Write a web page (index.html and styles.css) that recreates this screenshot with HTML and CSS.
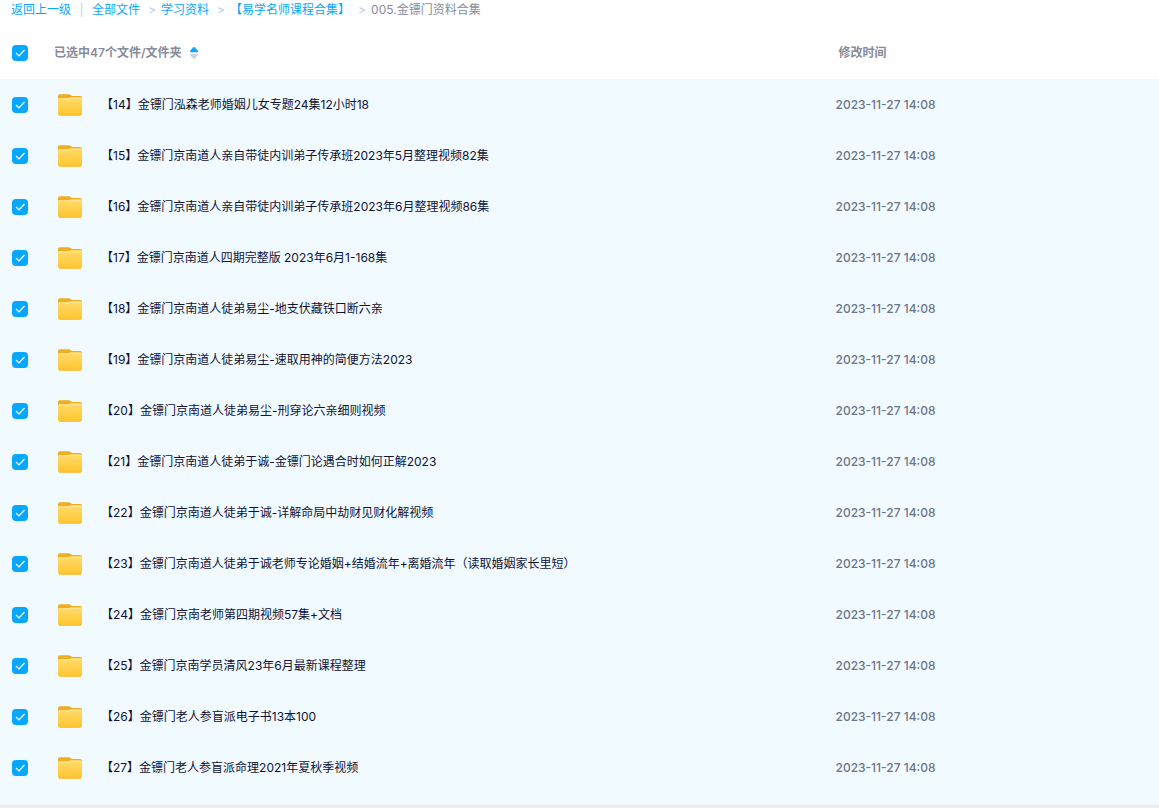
FILE: index.html
```html
<!DOCTYPE html>
<html lang="zh-CN">
<head>
  <meta charset="UTF-8">
  <meta name="viewport" content="width=device-width, initial-scale=1.0">
  <title>005.金镖门资料合集</title>
  <link rel="stylesheet" href="styles.css">
</head>
<body>
  <svg class="sprite" aria-hidden="true">
    <defs>
      <linearGradient id="folder-front" x1="0" y1="0" x2="0" y2="1">
        <stop offset="0" stop-color="#ffdc6c"/>
        <stop offset="0.5" stop-color="#ffd04c"/>
        <stop offset="1" stop-color="#ffc52e"/>
      </linearGradient>
      <symbol id="folder" viewBox="0 0 24 22">
        <path fill="#f0ad1e" d="M0 3.5V2.5C0 1 .8.2 2 .2h8.600c.9 0 1.400.3 2 .8l.6.5c.4.3.8.4 1.400.4H22c1.300 0 2 .7 2 2V9H0z"/>
        <path fill="url(#folder-front)" d="M0 5.500c0-1 .6-1.600 1.600-1.600h8.800c.8 0 1.300-.1 1.900-.4.5-.2 1-.2 1.600-.2h8.500c1 0 1.600.6 1.600 1.600v14.500c0 1.400-.8 2.200-2.200 2.200H2.200C.8 21.600 0 20.800 0 19.400z"/>
        <path fill="none" stroke="#ffe9a8" stroke-width=".8" d="M1 5h10c1.200 0 1.400-.6 2.800-.6H23"/>
        <path fill="none" stroke="#f5b728" stroke-width=".8" d="M1 20.900c.4.300.8.400 1.400.4h19.200c.6 0 1-.1 1.400-.4"/>
      </symbol>
    </defs>
  </svg>

  <nav class="breadcrumb" aria-label="路径">
    <a href="#">返回上一级</a>
    <span class="divider">|</span>
    <a href="#">全部文件</a>
    <span class="arrow">&gt;</span>
    <a href="#">学习资料</a>
    <span class="arrow">&gt;</span>
    <a href="#">【易学名师课程合集】</a>
    <span class="arrow">&gt;</span>
    <span class="current">005.金镖门资料合集</span>
  </nav>

  <main class="file-list">
    <table>
      <colgroup>
        <col class="col-check">
        <col class="col-icon">
        <col>
        <col class="col-date">
      </colgroup>
      <thead>
        <tr>
          <th class="check-cell"><input type="checkbox" id="check-all" aria-label="全选" checked></th>
          <th colspan="2">
            <button type="button" class="sort">
              已选中47个文件/文件夹
              <svg class="sort-icon" viewBox="0 0 8 12" aria-hidden="true">
                <path fill="#06a7ff" d="M4 0c.3 0 .6.2.9.5l2.700 3c.7.8.4 1.700-.5 1.700H.9C0 5.200-.3 4.300.4 3.500l2.700-3C3.400.2 3.700 0 4 0z"/>
                <path fill="#cfd0dc" d="M4 12c-.3 0-.6-.2-.9-.5l-2.700-3C-.3 7.700 0 6.800.9 6.800h6.200c.9 0 1.200.9.5 1.700l-2.700 3c-.3.300-.6.500-.9.500z"/>
              </svg>
            </button>
          </th>
          <th class="date-head">修改时间</th>
        </tr>
      </thead>
      <tbody id="files">
        <!-- rows are added by script.js -->
      </tbody>
    </table>
  </main>

  <script src="script.js"></script>
</body>
</html>
```
FILE: styles.css
```css
* {
  box-sizing: border-box;
}
body {
  margin: 0;
  min-height: 100vh;
  display: flex;
  flex-direction: column;
  font-family: Inter, "Noto Sans CJK SC", sans-serif;
  font-size: 12px;
  line-height: 20px;
  background-color: #fff;
}
.sprite {
  display: block;
  width: 0;
  height: 0;
}
.breadcrumb {
  display: flex;
  align-items: center;
  height: 27px;
  padding: 0 11px 7px;
  white-space: nowrap;
}
.breadcrumb a {
  color: #06a7ff;
  text-decoration: none;
}
.breadcrumb a:hover {
  text-decoration: underline;
}
.divider {
  width: 21px;
  text-align: center;
  color: #b8d4fa;
}
.arrow {
  width: 21px;
  padding-left: 8px;
  color: #b8c8f0;
}
.current {
  color: #878c9c;
}
.file-list {
  flex: 1;
  background-color: #f1fafe;
  border-bottom: 3px solid #ededed;
}
table {
  width: 100%;
  table-layout: fixed;
  border-collapse: collapse;
}
th, td {
  height: 51px;
  padding: 0;
  text-align: left;
  vertical-align: middle;
}
thead {
  background-color: #fff;
}
th {
  height: 52px;
  font-weight: 600;
  color: #878c9c;
}
.col-check {
  width: 54px;
}
.col-icon {
  width: 47px;
}
.col-date {
  width: 28%;
}
.check-cell {
  padding-left: 12px;
}
.icon-cell {
  padding-left: 4px;
}
.date-head {
  padding-left: 4px;
}
.date-cell {
  padding-left: 1px;
  font-weight: 500;
  color: #6b7586;
}
.file-name {
  overflow: hidden;
  white-space: nowrap;
  text-overflow: ellipsis;
  color: #0f1236;
}
.folder {
  display: block;
  width: 24px;
  height: 22px;
}
input[type="checkbox"] {
  appearance: none;
  display: block;
  width: 16px;
  height: 16px;
  margin: 0;
  border: 1px solid #d4d7de;
  border-radius: 4px;
  cursor: pointer;
}
input[type="checkbox"]:checked {
  border: none;
  background: #06a7ff url("data:image/svg+xml,%3Csvg xmlns='http://www.w3.org/2000/svg' viewBox='0 0 16 16'%3E%3Cpath d='M4 8l3 3 5.500-6' fill='none' stroke='%23fff' stroke-width='1.200'/%3E%3C/svg%3E") center / 16px no-repeat;
}
.sort {
  display: flex;
  align-items: center;
  gap: 9px;
  padding: 0;
  border: none;
  background: none;
  font: inherit;
  color: inherit;
  cursor: pointer;
}
.sort-icon {
  width: 8px;
  height: 12px;
}
```
FILE: script.js
```js
const files = [
  '【14】金镖门泓森老师婚姻儿女专题24集12小时18',
  '【15】金镖门京南道人亲自带徒内训弟子传承班2023年5月整理视频82集',
  '【16】金镖门京南道人亲自带徒内训弟子传承班2023年6月整理视频86集',
  '【17】金镖门京南道人四期完整版 2023年6月1-168集',
  '【18】金镖门京南道人徒弟易尘-地支伏藏铁口断六亲',
  '【19】金镖门京南道人徒弟易尘-速取用神的简便方法2023',
  '【20】金镖门京南道人徒弟易尘-刑穿论六亲细则视频',
  '【21】金镖门京南道人徒弟于诚-金镖门论遇合时如何正解2023',
  '【22】金镖门京南道人徒弟于诚-详解命局中劫财见财化解视频',
  '【23】金镖门京南道人徒弟于诚老师专论婚姻+结婚流年+离婚流年（读取婚姻家长里短）',
  '【24】金镖门京南老师第四期视频57集+文档',
  '【25】金镖门京南学员清风23年6月最新课程整理',
  '【26】金镖门老人参盲派电子书13本100',
  '【27】金镖门老人参盲派命理2021年夏秋季视频'
];

const tableBody = document.getElementById('files');
const checkAll = document.getElementById('check-all');

files.forEach((name, i) => {
  const row = document.createElement('tr');
  row.innerHTML = `
    <td class="check-cell"><input type="checkbox" id="file-${i}" checked></td>
    <td class="icon-cell"><svg class="folder" aria-hidden="true"><use href="#folder"/></svg></td>
    <td class="file-name"><label for="file-${i}">${name}</label></td>
    <td class="date-cell">2023-11-27 14:08</td>
  `;
  tableBody.appendChild(row);
});

checkAll.addEventListener('change', () => {
  tableBody.querySelectorAll('input').forEach(input => {
    input.checked = checkAll.checked;
  });
});
```
